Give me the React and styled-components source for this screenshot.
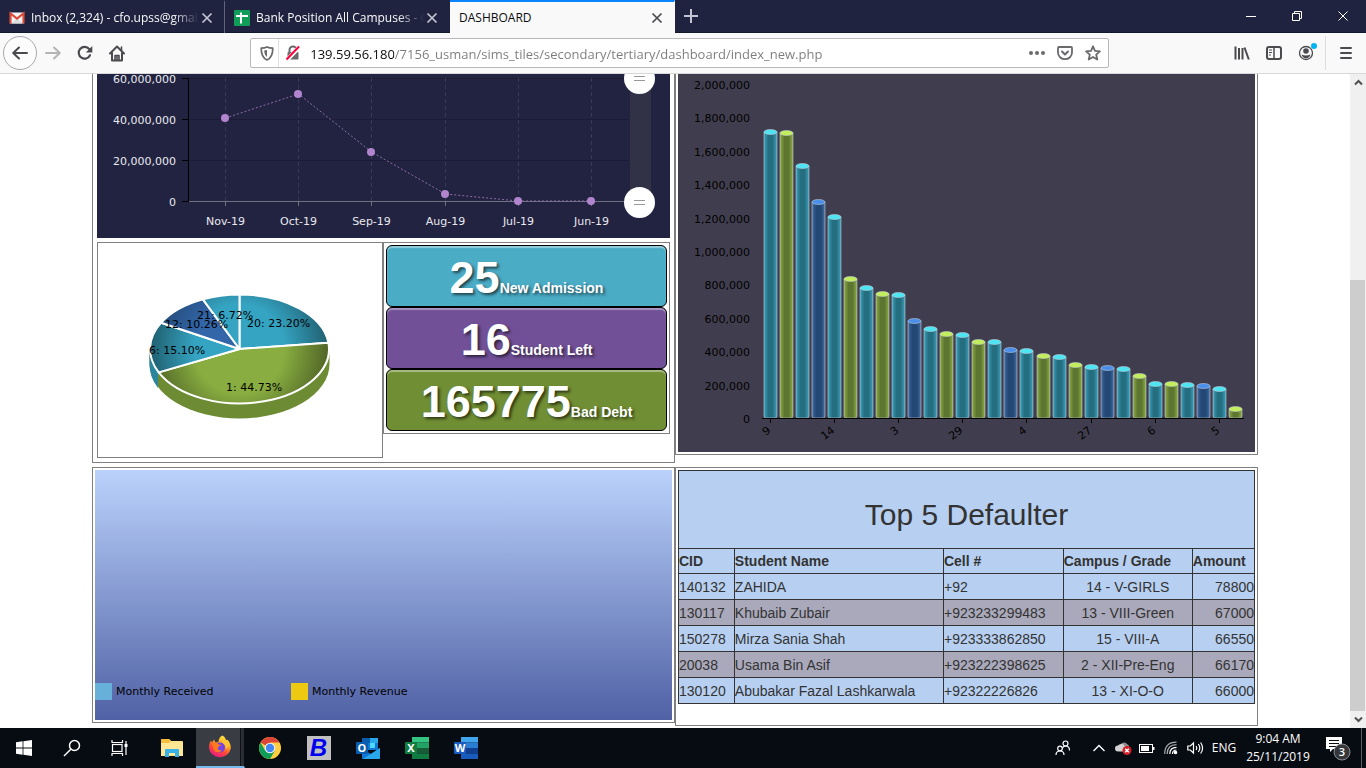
import React from "react";
import styled, { createGlobalStyle } from "styled-components";

const GlobalStyle = createGlobalStyle`
  *, *::before, *::after { box-sizing: border-box; }
  html, body { margin: 0; padding: 0; }
  body { background: #fff; font-family: "Liberation Sans", Arial, sans-serif; font-size: 14px; color: #333; }
  button { font: inherit; color: inherit; background: none; border: 0; padding: 0; margin: 0; }
  svg { display: block; }
`;

const UI_FONT = `"Open Sans", "Noto Sans", sans-serif`;
const CHART_FONT = `"DejaVu Sans", Verdana, sans-serif`;

const Window = styled.div`
  display: flex;
  flex-direction: column;
  min-height: 100vh;
`;

/* ---------- tab strip ---------- */

const TabStrip = styled.header`
  display: flex;
  height: 33px;
  background: #202340;
  border-bottom: 1px solid #15172c;
  color: #f9f9fa;
  font: 12px/16px ${UI_FONT};
`;

const Tab = styled.div`
  display: flex;
  align-items: center;
  flex: 0 1 225px;
  min-width: 0;
  height: 33px;
  padding: 0 9px;
  background: ${(p) => (p.$active ? "#f9f9fa" : "transparent")};
  color: ${(p) => (p.$active ? "#0c0c0d" : "inherit")};
  border-top: 2px solid ${(p) => (p.$active ? "#0a84ff" : "transparent")};
  border-right: 1px solid ${(p) => (p.$divided ? "#62647a" : "transparent")};
`;

const TabTitle = styled.button`
  display: flex;
  align-items: center;
  gap: 6px;
  flex: 1;
  min-width: 0;
  overflow: hidden;
  text-align: left;
`;

const TabText = styled.span`
  flex: 1;
  overflow: hidden;
  white-space: nowrap;
  ${(p) => p.$fade && "mask-image: linear-gradient(90deg, #000 calc(100% - 26px), transparent);"}
`;

const SmallButton = styled.button`
  display: grid;
  place-items: center;
  width: 16px;
  height: 16px;
  color: ${(p) => (p.$dark ? "#4a4a4f" : "#c4c5d2")};
`;

const NewTab = styled.button`
  display: grid;
  place-items: center;
  width: 32px;
  color: #c4c5d2;
`;

const WindowControls = styled.div`
  display: flex;
  margin-left: auto;
`;

const WindowButton = styled.button`
  display: grid;
  place-items: center;
  width: 46px;
  color: #fff;
`;

/* ---------- navigation bar ---------- */

const NavBar = styled.nav`
  display: flex;
  align-items: center;
  height: 41px;
  background: #f9f9fa;
  border-bottom: 1px solid #d8d8da;
  color: #4a4a4f;
`;

const NavGroup = styled.div`
  display: flex;
  align-items: center;
  padding: 0 ${(p) => p.$end || 0}px 0 ${(p) => p.$start || 0}px;
`;

const NavButton = styled.button`
  display: grid;
  place-items: center;
  width: 32px;
  height: 32px;
  color: ${(p) => (p.$muted ? "#b5b5b8" : "inherit")};
`;

const BackButton = styled(NavButton)`
  width: 34px;
  height: 34px;
  border: 1px solid #a9a9ab;
  border-radius: 50%;
  background: #fcfcfc;
`;

const Spacer = styled.div`
  flex: 118 1 0;
`;

const NavDivider = styled.div`
  width: 1px;
  height: 34px;
  margin: 0 4px 0 3px;
  background: #dcdcde;
`;

const UrlBar = styled.div`
  display: flex;
  align-items: center;
  flex: 857 1 0;
  min-width: 0;
  height: 30px;
  padding: 0 1px 0 4px;
  background: #fff;
  border: 1px solid #b9b9bc;
  border-radius: 2px;
`;

const UrlButton = styled.button`
  display: grid;
  place-items: center;
  width: 28px;
  height: 28px;
  color: #6a6a6d;
`;

const UrlShield = styled(UrlButton)`
  width: 24px;
  border-right: 1px solid #dedee0;
`;

const UrlInput = styled.input`
  flex: 1;
  min-width: 0;
  height: 28px;
  padding: 2px 0 0 3px;
  border: 0;
  outline: 0;
  font: 13px/20px ${UI_FONT};
  color: transparent;
  background: linear-gradient(90deg, #0c0c0d 87px, #7b7b7e 87px);
  background-clip: text;
`;

/* ---------- page ---------- */

const Viewport = styled.div`
  display: flex;
  flex: 1;
  background: #fff;
`;

const Page = styled.main`
  flex: 1;
  min-width: 0;
`;

const Board = styled.div`
  display: grid;
  grid-template-columns: 1fr 1fr;
  align-items: start;
  row-gap: 4px;
  max-width: 1166px;
  margin: 0 auto;
`;

const Panel = styled.section`
  min-width: 0;
  padding: ${(p) => p.$pad}px;
  border: 1px solid #808080;
  ${(p) => p.$continued && "border-top: 0; padding-top: 0;"}
`;

const DefaulterPanel = styled(Panel)`
  padding-bottom: 21px;
`;

const Chart = styled.svg`
  width: 100%;
  height: auto;
  background: ${(p) => p.$bg || "transparent"};
  font: 11px ${CHART_FONT};
`;

const SplitRow = styled.div`
  display: grid;
  grid-template-columns: 286fr 287fr;
  align-items: start;
  margin-top: 4px;
`;

const Box = styled.div`
  border: 1px solid #808080;
  padding: ${(p) => p.$pad || 0}px;
`;

const Tile = styled.button`
  display: block;
  width: 100%;
  height: 62px;
  padding-top: 4px;
  border: 1px solid #000;
  border-radius: 6px;
  background: ${(p) => p.$color};
  box-shadow: inset 0 2px 1px rgba(255, 255, 255, 0.4);
  color: #fff;
  font-weight: bold;
  font-size: 14px;
  line-height: 56px;
  text-shadow: 2px 2px 3px rgba(0, 0, 0, 0.6);
`;

const TileNumber = styled.span`
  font-size: 45px;
`;

const RevenueChart = styled.div`
  display: flex;
  align-items: flex-end;
  height: 250px;
  padding-bottom: 20px;
  background: linear-gradient(#bbd2fc, #5061a5);
`;

const LegendItem = styled.div`
  display: flex;
  align-items: center;
  gap: 4px;
  width: 196px;
  font: 11px/17px ${CHART_FONT};
  color: #000;
`;

const Swatch = styled.span`
  width: 17px;
  height: 17px;
  background: ${(p) => p.$color};
`;

/* ---------- defaulter table ---------- */

const Table = styled.table`
  width: 100%;
  table-layout: fixed;
  border-collapse: collapse;
  background: #b7d0f1;
  line-height: 20px;
`;

const Col = styled.col`
  width: ${(p) => p.$share}%;
`;

const TitleCell = styled.th`
  height: 78px;
  padding: 10px 0 0;
  border: 1px solid #333;
  font-size: 30px;
  font-weight: normal;
`;

const HeadCell = styled.th`
  height: 25px;
  padding: 0;
  border: 1px solid #333;
  text-align: left;
`;

const Row = styled.tr`
  background: ${(p) => (p.$striped ? "#aaa9bb" : "transparent")};
`;

const Cell = styled.td`
  height: 26px;
  padding: 0;
  border: 1px solid #333;
  text-align: ${(p) => p.$align || "left"};
  white-space: nowrap;
`;

/* ---------- scrollbar ---------- */

const ScrollBar = styled.div`
  display: flex;
  flex-direction: column;
  width: 16px;
  background: #f0f0f0;
  color: #505050;
`;

const ScrollButton = styled.button`
  display: grid;
  place-items: center;
  height: 17px;
`;

const ScrollGap = styled.div`
  flex: 189 1 0;
`;

const ScrollThumb = styled.div`
  flex: 431 1 0;
  margin-right: 1px;
  background: #cdcdcd;
`;

/* ---------- taskbar ---------- */

const TaskBar = styled.footer`
  display: flex;
  justify-content: space-between;
  height: 40px;
  background: #070b12;
  color: #fff;
`;

const TaskGroup = styled.div`
  display: flex;
  margin-right: ${(p) => p.$gap || 0}px;
`;

const TaskButton = styled.button`
  display: grid;
  place-items: center;
  width: ${(p) => (p.$app ? 49 : 48)}px;
  height: 40px;
  ${(p) =>
    p.$active &&
    "background: linear-gradient(90deg, #393d43 44px, #0f1319 44px 45px, #2a2e34 45px); border-bottom: 2px solid #76b9ed; border-right: 1px solid #070b12;"}
`;

const TrayButton = styled.button`
  display: grid;
  place-items: center;
  width: ${(p) => p.$w || 24}px;
  height: 40px;
`;

const TrayText = styled(TrayButton)`
  font: 12px/18px ${UI_FONT};
`;

const ShowDesktop = styled.button`
  width: 5px;
  border-left: 1px solid #5c6066;
`;

/* ---------- icons ---------- */

const Cross = ({ size = 12, w = 1.7 }) => (
  <svg width={size} height={size} viewBox="0 0 12 12" stroke="currentColor" strokeWidth={w} fill="none">
    <path d="M1.5 1.5l9 9M10.5 1.5l-9 9" />
  </svg>
);

const GmailIcon = () => (
  <svg width="16" height="16" viewBox="0 0 16 16">
    <path d="M1 2.5h14v11H1z" fill="#f5f5f5" />
    <path d="M3 13.5L8 8l5 5.5z" fill="#dcdcdc" />
    <path d="M1.5 13.5V3.500L8 8.500l6.500-5v10" fill="none" stroke="#dd4b39" strokeWidth="2.2" />
  </svg>
);

const SheetsIcon = () => (
  <svg width="16" height="16" viewBox="0 0 16 16">
    <rect width="16" height="16" rx="1" fill="#0f9d58" />
    <path d="M7 2.5v11M2 6h12" stroke="#fff" strokeWidth="2" />
  </svg>
);

const Back = () => (
  <svg width="18" height="18" viewBox="0 0 18 18" fill="none" stroke="currentColor" strokeWidth="2" strokeLinecap="round" strokeLinejoin="round">
    <path d="M16 9H2.5M8 3.5L2.2 9 8 14.5" />
  </svg>
);

const Forward = () => (
  <svg width="18" height="18" viewBox="0 0 18 18" fill="none" stroke="currentColor" strokeWidth="2" strokeLinecap="round" strokeLinejoin="round">
    <path d="M2 9h13.5M10 3.5L15.8 9 10 14.5" />
  </svg>
);

const Reload = () => (
  <svg width="16" height="16" viewBox="0 0 16 16">
    <path d="M13 10.2A5.9 5.9 0 1 1 12.2 4" fill="none" stroke="currentColor" strokeWidth="2.1" strokeLinecap="round" />
    <path d="M15.3 1v6.5H8.8z" fill="currentColor" />
  </svg>
);

const Home = () => (
  <svg width="16" height="17" viewBox="0 0 16 17" fill="none" stroke="currentColor" strokeWidth="2" strokeLinejoin="round" strokeLinecap="round">
    <path d="M1 8.5l7-7 7 7" />
    <path d="M3 8v7.5h10V8" />
    <path d="M8 15v-4M6 15v-4.5h4V15M12.5 2v3" strokeWidth="1.6" />
  </svg>
);

const Shield = () => (
  <svg width="14" height="15" viewBox="0 0 14 15">
    <path d="M7 1C5 2 3 2.200 1.200 2.200c0 5 .8 9.500 5.800 11.800 5-2.300 5.800-6.800 5.800-11.800C11 2.200 9 2 7 1z" fill="none" stroke="currentColor" strokeWidth="1.700" strokeLinejoin="round" />
    <path d="M7 4v7C4.800 9.500 4.300 7 4.200 4.600z" fill="currentColor" />
  </svg>
);

const LockOff = () => (
  <svg width="16" height="16" viewBox="0 0 16 16">
    <path d="M4.500 8V5a3.500 3.500 0 0 1 7 0v3" fill="none" stroke="currentColor" strokeWidth="2" />
    <rect x="2.500" y="7" width="11" height="7.500" rx="1" fill="currentColor" />
    <path d="M2 15L14.500 2" stroke="#fff" strokeWidth="4" />
    <path d="M1.500 14.500L14 1.500" stroke="#ff0039" strokeWidth="2" />
  </svg>
);

const Dots = () => (
  <svg width="16" height="16" viewBox="0 0 16 16" fill="currentColor">
    <circle cx="2" cy="8" r="2" /><circle cx="8" cy="8" r="2" /><circle cx="14" cy="8" r="2" />
  </svg>
);

const Pocket = () => (
  <svg width="16" height="16" viewBox="0 0 16 16" fill="none" stroke="currentColor" strokeLinecap="round" strokeLinejoin="round">
    <path d="M2 2h12q1 0 1 1v4.500a7 6.700 0 0 1-14 0V3q0-1 1-1z" strokeWidth="1.800" />
    <path d="M5 6.500l3 3 3-3" strokeWidth="2" />
  </svg>
);

const Star = () => (
  <svg width="16" height="16" viewBox="0 0 16 16" fill="none" stroke="currentColor" strokeWidth="1.800" strokeLinejoin="round">
    <path d="M8 1.300l2 4.500 4.900.5-3.700 3.300 1.100 4.900L8 12l-4.300 2.500 1.100-4.900L1.100 6.300 6 5.800z" />
  </svg>
);

const Library = () => (
  <svg width="16" height="16" viewBox="0 0 16 16" stroke="currentColor" strokeWidth="2" fill="none">
    <path d="M1.500 1.500v13M5 3v11.500M8.500 3v11.500M10.500 2.500l4.300 12" />
  </svg>
);

const SidebarIcon = () => (
  <svg width="16" height="16" viewBox="0 0 16 16" fill="none" stroke="currentColor">
    <rect x="1" y="2" width="14" height="12" rx="2" strokeWidth="2" />
    <path d="M8 2v12" strokeWidth="1.500" />
    <path d="M3 5h3M3 7.500h3M3 10h2" />
  </svg>
);

const Account = () => (
  <svg width="22" height="22" viewBox="0 0 22 22">
    <circle cx="11" cy="11" r="6.500" fill="none" stroke="currentColor" strokeWidth="1.300" />
    <circle cx="11" cy="9" r="2.800" fill="currentColor" />
    <path d="M6.500 12.500q4.500 2 9 0-1 3.700-4.500 3.700t-4.500-3.700z" fill="currentColor" />
    <circle cx="19" cy="4" r="3" fill="#00b3f4" />
  </svg>
);

const Menu = () => (
  <svg width="14" height="14" viewBox="0 0 14 14" stroke="currentColor" strokeWidth="2" strokeLinecap="round">
    <path d="M2 2h10M2 7h10M2 12h10" />
  </svg>
);

const Chevron = ({ down }) => (
  <svg width="9" height="7" viewBox="0 0 9 7" fill="none" stroke="currentColor" strokeWidth="2">
    <path d={down ? "M1 1.500L4.500 5 8 1.500" : "M1 5.500L4.500 2 8 5.500"} />
  </svg>
);

const WindowsLogo = () => (
  <svg width="16" height="16" viewBox="0 0 16 16" fill="#fff">
    <path d="M0 2.200L6.600 1.300V7.600H0zM7.400 1.200L16 0V7.600H7.400zM0 8.400H6.600V14.700L0 13.800zM7.400 8.400H16V16L7.400 14.800z" />
  </svg>
);

const SearchIcon = () => (
  <svg width="18" height="18" viewBox="0 0 18 18" fill="none" stroke="#fff" strokeWidth="1.500">
    <circle cx="11.500" cy="6.500" r="5" /><path d="M7.800 10.200L1 17" />
  </svg>
);

const TaskView = () => (
  <svg width="18" height="16" viewBox="0 0 18 16" fill="none" stroke="#fff" strokeWidth="1.200">
    <path d="M1 0v2.500h10.500V0M1 16v-2.500h10.500V16" />
    <rect x="1.500" y="4.500" width="9.500" height="7" />
    <path d="M15 1v14" /><path d="M13.500 4h3v3h-3z" fill="#fff" stroke="none" />
  </svg>
);

const ExplorerIcon = () => (
  <svg width="22" height="20" viewBox="0 0 22 20">
    <path d="M0 2q0-1 1-1h7l2 2h11q1 0 1 1v14H0z" fill="#ffe28a" />
    <path d="M0 2q0-1 1-1h7l2 2-2 2H0z" fill="#f5bd3d" />
    <path d="M0 5h22v12H0z" fill="#ffe694" />
    <path d="M4 19v-7q0-1 1-1h12q1 0 1 1v7h-4v-4H8v4z" fill="#38b0e8" />
  </svg>
);

const FirefoxIcon = () => (
  <svg width="24" height="24" viewBox="0 0 24 24">
    <defs>
      <linearGradient id="fox" x1="0.8" y1="0" x2="0.3" y2="1">
        <stop offset="0" stopColor="#fff04a" /><stop offset="0.35" stopColor="#ffb128" />
        <stop offset="0.65" stopColor="#ff4b36" /><stop offset="1" stopColor="#e5158a" />
      </linearGradient>
    </defs>
    <path d="M14.500.5c2 1 3 2.800 3.500 4.800l1.500-.5c2.300 2.500 3.500 5.500 3.300 8.500A11 10.500 0 0 1 1 13c0-3 .5-5 2-7.500l1 2 2-3 1.500 3 3-.5c0-3 1.500-5.500 4-6.500z" fill="url(#fox)" />
    <circle cx="12" cy="12.500" r="5" fill="#7542e5" />
    <path d="M4 8c3-1 5 0 7 1.500l3 .5c-1.500 1-3 1-4 2.500-1 2 1 3.500 4 2.500-2 3-6 3-8 0-1-2-1-4-2-7z" fill="#ff7a1e" />
    <path d="M14 7c3 1.500 4.500 4 3.500 7.500 3-2 3.500-6 1.500-9l-2-1z" fill="#ffc534" />
  </svg>
);

const ChromeIcon = () => (
  <svg width="22" height="22" viewBox="0 0 22 22">
    <circle cx="11" cy="11" r="11" fill="#ffcd40" />
    <path d="M11 11L1.500 5.500A11 11 0 0 1 20.500 5.500H11z" fill="#db4437" />
    <path d="M1.500 5.500A11 11 0 0 0 11 22l4.800-8.300H6.300z" fill="#0f9d58" />
    <circle cx="11" cy="11" r="5.300" fill="#f1f1f1" />
    <circle cx="11" cy="11" r="4.200" fill="#4285f4" />
  </svg>
);

const BIcon = styled.span`
  display: grid;
  place-items: center;
  width: 24px;
  height: 24px;
  background: #c0c0c0;
  color: #0000f0;
  font: italic bold 24px/24px "Liberation Sans", Arial, sans-serif;
`;

const OfficeIcon = ({ letter, colors, mail }) => (
  <svg width="24" height="22" viewBox="0 0 24 22">
    {mail ? (
      <>
        <path d="M6 1h16v12H6z" fill={colors[1]} />
        <path d="M6 1h8v5H6z" fill={colors[3]} />
        <path d="M14 1h8v5h-8z" fill={colors[0]} />
        <path d="M14 6h5v5h-5z" fill={colors[2]} />
        <path d="M6 12l9 5 9-6v10q0 1-1 1H7q-1 0-1-1z" fill={colors[1]} />
        <path d="M7 22l17-11v10q0 1-1 1z" fill={colors[0]} />
      </>
    ) : (
      colors.map((c, i) => <path key={c} d={`M7 ${i * 5.5}h17v5.500H7z`} fill={c} />)
    )}
    <rect x="0" y="5" width="12" height="12" rx="1" fill={colors[3]} />
    <text x="6" y="15" textAnchor="middle" fill="#fff" fontFamily="Open Sans, sans-serif" fontWeight="700" fontSize="11">{letter}</text>
  </svg>
);

const People = () => (
  <svg width="16" height="16" viewBox="0 0 16 16" fill="none" stroke="#fff" strokeWidth="1.200">
    <circle cx="10.500" cy="3.500" r="2.500" /><circle cx="5" cy="8.500" r="2.300" />
    <path d="M1 15q0-4 4-4t4 4M7.500 8q1-2 3-2 4 0 4 4.500" />
  </svg>
);

const TrayUp = () => (
  <svg width="12" height="8" viewBox="0 0 12 8" fill="none" stroke="#fff" strokeWidth="1.400"><path d="M.5 7L6 1.500 11.500 7" /></svg>
);

const CloudError = () => (
  <svg width="17" height="14" viewBox="0 0 17 14">
    <path d="M5 5a4 4 0 0 1 7-2 3.500 3.500 0 0 1 2 4v2H5z" fill="#8d8d8d" />
    <path d="M3 10.500a3 3 0 0 1 0-6 4 4 0 0 1 6-.5l3 6.500z" fill="#d2d2d2" />
    <circle cx="12" cy="9.500" r="4.500" fill="#d3202a" />
    <path d="M10.200 7.700l3.600 3.600M13.800 7.700l-3.600 3.600" stroke="#fff" strokeWidth="1.500" />
  </svg>
);

const Battery = () => (
  <svg width="16" height="9" viewBox="0 0 16 9"><rect x=".5" y=".5" width="13" height="8" fill="none" stroke="#fff" /><path d="M2 2h8v5H2zM14 3h1.500v3H14z" fill="#fff" /></svg>
);

const Wifi = () => (
  <svg width="14" height="14" viewBox="0 0 14 14" fill="none" stroke="#fff" strokeWidth="1.200">
    <circle cx="11.500" cy="11.500" r="1.200" fill="#fff" />
    <path d="M8.500 13q0-4 4-4M5.800 13q0-6.700 6.700-6.700" />
    <path d="M3.200 13q0-9.300 9.300-9.300M.7 13Q.7 1.200 12.500 1.200" stroke="#a9abae" />
  </svg>
);

const Sound = () => (
  <svg width="17" height="14" viewBox="0 0 17 14" fill="none" stroke="#fff" strokeWidth="1.200">
    <path d="M.8 5h2.500L6.500 2v10L3.300 9H.8zM9 5q1.500 2 0 4M11.300 3q3 4 0 8M13.600 1.500q4 5.500 0 11" />
  </svg>
);

const Notice = () => (
  <svg width="26" height="26" viewBox="0 0 26 26">
    <path d="M1 2h16v12H8l-3 3v-3H1z" fill="#fff" />
    <path d="M4 5.500h10M4 8.500h10M4 11.500h7" stroke="#070b12" />
    <circle cx="17" cy="17" r="8" fill="#35373b" stroke="#8c8e92" />
    <text x="17" y="21" textAnchor="middle" fill="#fff" fontFamily="Open Sans, sans-serif" fontSize="11" fontWeight="600">3</text>
  </svg>
);

/* ---------- charts ---------- */

const MONTHS = [
  ["Nov-19", 44], ["Oct-19", 20], ["Sep-19", 78],
  ["Aug-19", 120], ["Jul-19", 127], ["Jun-19", 127],
];
const monthX = (i) => Math.round(128 + i * 73.2) + 0.5;
const LEVELS = ["60,000,000", "40,000,000", "20,000,000", "0"];

function Handle({ y }) {
  return (
    <g>
      <circle cx="542.5" cy={y} r="15.500" fill="#fff" />
      <path d={`M537 ${y - 2}h11M537 ${y + 2}h11`} stroke="#999" />
    </g>
  );
}

function LineChart() {
  return (
    <Chart viewBox="0 0 573 164" $bg="#222341" role="img" aria-label="Monthly amounts">
      <rect x="533" width="21" height="128" fill="#323246" />
      {LEVELS.map((label, i) => {
        const y = 4.5 + i * 41;
        return (
          <g key={label}>
            {i < 3 && <path d={`M92 ${y}H532`} stroke="#1c1a36" />}
            <path d={`M85 ${y}h7`} stroke="#000" />
            <text x="79" y={y + 4.5} textAnchor="end" fill="#e9e9ee">{label}</text>
          </g>
        );
      })}
      <path d="M92 127.500H532" stroke="#70707f" />
      <path d="M91.500 4v124" stroke="#000" />
      {MONTHS.map(([label], i) => (
        <g key={label}>
          <path d={`M${monthX(i)} 4V127`} stroke="#3b3a56" strokeDasharray="4 3" />
          <path d={`M${monthX(i)} 127v5`} stroke="#70707f" />
          <text x={monthX(i)} y="151" textAnchor="middle" fill="#e9e9ee">{label}</text>
        </g>
      ))}
      <polyline points={MONTHS.map(([, y], i) => `${monthX(i)},${y}`).join(" ")} fill="none" stroke="#8d6ca9" strokeDasharray="2 2" />
      {MONTHS.map(([label, y], i) => <circle key={label} cx={monthX(i) - 0.5} cy={y} r="4" fill="#b085cd" />)}
      <Handle y={4.5} />
      <Handle y={128.5} />
    </Chart>
  );
}

const SLICES = [
  { label: "20: 23.20%", share: 0.232, fill: "url(#pieTeal)", x: 149, y: 84 },
  { label: "1: 44.73%", share: 0.4473, fill: "url(#pieGreen)", x: 128, y: 148 },
  { label: "6: 15.10%", share: 0.151, fill: "url(#pieTeal)", x: 51, y: 111 },
  { label: "12: 10.26%", share: 0.1026, fill: "url(#pieBlue)", x: 67, y: 85 },
  { label: "21: 6.72%", share: 0.0671, fill: "url(#pieTeal)", x: 99, y: 76 },
];
const PIE = { cx: 141.5, cy: 106, rx: 89.5, ry: 54.5 };
const piePoint = (t) => {
  const a = t * Math.PI * 2;
  return `${(PIE.cx + PIE.rx * Math.sin(a)).toFixed(1)} ${(PIE.cy - PIE.ry * Math.cos(a)).toFixed(1)}`;
};

function PieGradient({ id, from, to }) {
  return (
    <radialGradient id={id} gradientUnits="userSpaceOnUse" cx={PIE.cx} cy={PIE.cy} r={PIE.rx}>
      <stop offset="0" stopColor={from} /><stop offset="0.5" stopColor={from} /><stop offset="1" stopColor={to} />
    </radialGradient>
  );
}

function PieChart() {
  let start = 0;
  return (
    <Chart viewBox="0 0 284 214" role="img" aria-label="Share by campus">
      <defs>
        <PieGradient id="pieTeal" from="#35a4c2" to="#205f70" />
        <PieGradient id="pieGreen" from="#89ad41" to="#506526" />
        <PieGradient id="pieBlue" from="#3266a8" to="#234874" />
      </defs>
      <path d="M51.500 106v15a90 54.500 0 0 0 180 0v-15z" fill="#6d8b33" />
      <path d="M51.500 106v15q0 13 8.500 24v-24z" fill="#2b869d" />
      {SLICES.map((s) => {
        const end = start + s.share;
        const d = `M${PIE.cx} ${PIE.cy}L${piePoint(start)}A${PIE.rx} ${PIE.ry} 0 0 1 ${piePoint(end)}z`;
        start = end;
        return <path key={s.label} d={d} fill={s.fill} stroke="#fff" strokeWidth="2" strokeLinejoin="round" />;
      })}
      {SLICES.map((s) => <text key={s.label} x={s.x} y={s.y} fill="#000">{s.label}</text>)}
    </Chart>
  );
}

const BAR_TOPS = [58, 59, 92, 128, 143, 205, 214, 220, 221, 247, 255, 260, 261, 268, 268, 276, 277, 282, 283, 291, 293, 294, 295, 302, 310, 310, 311, 312, 315, 335];
const BAR_HUES = ["Teal", "Green", "Teal", "Blue", "Teal", "Green"];
const HUES = {
  Teal: { edge: "#3fa3bd", mid: "#256e80", side: "#2d8399", cap: "#4de5f2" },
  Green: { edge: "#92ad4e", mid: "#5c7530", side: "#6f8d37", cap: "#c2ee5c" },
  Blue: { edge: "#4d74a6", mid: "#244773", side: "#2b5488", cap: "#4a90ea" },
};
const BAR_LABELS = ["9", "14", "3", "29", "4", "27", "6", "5"];
const barX = (i) => Math.floor(92.5 + i * 16.03) + 0.5;

function BarChart() {
  return (
    <Chart viewBox="0 0 577 378" $bg="#403e4e" role="img" aria-label="Amounts by campus">
      <defs>
        {Object.entries(HUES).map(([name, h]) => (
          <linearGradient key={name} id={`bar${name}`}>
            <stop offset="0" stopColor={h.edge} /><stop offset="0.2" stopColor={h.side} />
            <stop offset="0.35" stopColor={h.mid} /><stop offset="0.65" stopColor={h.mid} />
            <stop offset="0.8" stopColor={h.side} /><stop offset="1" stopColor={h.edge} />
          </linearGradient>
        ))}
      </defs>
      {Array.from({ length: 11 }, (_, i) => (
        <text key={i} x="72" y={Math.round(15 + i * 33.4)} textAnchor="end" fill="#000">
          {(2000000 - i * 200000).toLocaleString("en-US")}
        </text>
      ))}
      {BAR_TOPS.map((y, i) => {
        const hue = BAR_HUES[i % 6];
        const x = barX(i);
        return (
          <g key={i} stroke="#c9d0dc" strokeOpacity="0.55">
            <path d={`M${x - 6.5} ${y}V342q0 2 2 2h9q2 0 2-2V${y}z`} fill={`url(#bar${hue})`} />
            <ellipse cx={x} cy={y} rx="6.500" ry="2.500" fill={HUES[hue].cap} />
          </g>
        );
      })}
      <path d="M84 344.500H566" stroke="#000" />
      {BAR_LABELS.map((label, i) => {
        const x = barX(i * 4);
        return (
          <g key={label}>
            <path d={`M${x} 344v5`} stroke="#000" />
            <text transform={`translate(${x + 1} 358) rotate(-36)`} textAnchor="end" fill="#000">{label}</text>
          </g>
        );
      })}
    </Chart>
  );
}

const TILES = [
  { value: "25", label: "New Admission", color: "#4bacc6" },
  { value: "16", label: "Student Left", color: "#715097" },
  { value: "165775", label: "Bad Debt", color: "#708e33" },
];

const DEFAULTERS = [
  ["140132", "ZAHIDA", "+92", "14 - V-GIRLS", "78800"],
  ["130117", "Khubaib Zubair", "+923233299483", "13 - VIII-Green", "67000"],
  ["150278", "Mirza Sania Shah", "+923333862850", "15 - VIII-A", "66550"],
  ["20038", "Usama Bin Asif", "+923222398625", "2 - XII-Pre-Eng", "66170"],
  ["130120", "Abubakar Fazal Lashkarwala", "+92322226826", "13 - XI-O-O", "66000"],
];
const ALIGN = ["left", "left", "left", "center", "right"];

function DefaulterTable() {
  return (
    <Table>
      <colgroup>
        {[9.7, 36.3, 20.8, 22.4, 10.8].map((share) => <Col key={share} $share={share} />)}
      </colgroup>
      <thead>
        <tr><TitleCell colSpan={5}>Top 5 Defaulter</TitleCell></tr>
        <tr>
          {["CID", "Student Name", "Cell #", "Campus / Grade", "Amount"].map((h) => <HeadCell key={h} scope="col">{h}</HeadCell>)}
        </tr>
      </thead>
      <tbody>
        {DEFAULTERS.map((row, r) => (
          <Row key={row[0]} $striped={r % 2 === 1}>
            {row.map((value, c) => <Cell key={c} $align={ALIGN[c]}>{value}</Cell>)}
          </Row>
        ))}
      </tbody>
    </Table>
  );
}

export default function App() {
  return (
    <Window>
      <GlobalStyle />
      <TabStrip>
        <Tab $divided>
          <TabTitle><GmailIcon /><TabText $fade>Inbox (2,324) - cfo.upss@gmail.</TabText></TabTitle>
          <SmallButton aria-label="Close tab"><Cross /></SmallButton>
        </Tab>
        <Tab>
          <TabTitle><SheetsIcon /><TabText $fade>Bank Position All Campuses - G</TabText></TabTitle>
          <SmallButton aria-label="Close tab"><Cross /></SmallButton>
        </Tab>
        <Tab $active>
          <TabTitle><TabText>DASHBOARD</TabText></TabTitle>
          <SmallButton $dark aria-label="Close tab"><Cross /></SmallButton>
        </Tab>
        <NewTab aria-label="New tab">
          <svg width="14" height="14" viewBox="0 0 14 14" stroke="currentColor" strokeWidth="2"><path d="M7 0v14M0 7h14" /></svg>
        </NewTab>
        <WindowControls>
          <WindowButton aria-label="Minimize">
            <svg width="10" height="10" viewBox="0 0 10 10" stroke="currentColor"><path d="M0 5.500h10" /></svg>
          </WindowButton>
          <WindowButton aria-label="Restore">
            <svg width="10" height="10" viewBox="0 0 10 10" fill="none" stroke="currentColor"><path d="M.5 2.500h7v7h-7zM2.500 2.500v-2h7v7h-2" /></svg>
          </WindowButton>
          <WindowButton aria-label="Close"><Cross w={1} /></WindowButton>
        </WindowControls>
      </TabStrip>

      <NavBar>
        <NavGroup $start={3}>
          <BackButton aria-label="Back"><Back /></BackButton>
          <NavButton $muted aria-label="Forward"><Forward /></NavButton>
          <NavButton aria-label="Reload"><Reload /></NavButton>
          <NavButton aria-label="Home"><Home /></NavButton>
        </NavGroup>
        <Spacer />
        <UrlBar>
          <UrlShield aria-label="Tracking protection"><Shield /></UrlShield>
          <UrlButton aria-label="Connection not secure"><LockOff /></UrlButton>
          <UrlInput aria-label="Address" defaultValue="139.59.56.180/7156_usman/sims_tiles/secondary/tertiary/dashboard/index_new.php" />
          <UrlButton aria-label="Page actions"><Dots /></UrlButton>
          <UrlButton aria-label="Save to Pocket"><Pocket /></UrlButton>
          <UrlButton aria-label="Bookmark"><Star /></UrlButton>
        </UrlBar>
        <Spacer />
        <NavGroup $end={4}>
          <NavButton aria-label="Library"><Library /></NavButton>
          <NavButton aria-label="Sidebars"><SidebarIcon /></NavButton>
          <NavButton aria-label="Account"><Account /></NavButton>
          <NavDivider />
          <NavButton aria-label="Menu"><Menu /></NavButton>
        </NavGroup>
      </NavBar>

      <Viewport>
        <Page>
          <Board>
            <Panel $pad={4} $continued>
              <LineChart />
              <SplitRow>
                <Box><PieChart /></Box>
                <Box $pad={2}>
                  {TILES.map((t) => (
                    <Tile key={t.label} $color={t.color}><TileNumber>{t.value}</TileNumber>{t.label}</Tile>
                  ))}
                </Box>
              </SplitRow>
            </Panel>
            <Panel $pad={2} $continued>
              <BarChart />
            </Panel>
            <Panel $pad={2}>
              <RevenueChart>
                <LegendItem><Swatch $color="#67b0da" />Monthly Received</LegendItem>
                <LegendItem><Swatch $color="#edc911" />Monthly Revenue</LegendItem>
              </RevenueChart>
            </Panel>
            <DefaulterPanel $pad={2}>
              <DefaulterTable />
            </DefaulterPanel>
          </Board>
        </Page>
        <ScrollBar>
          <ScrollButton aria-label="Scroll up"><Chevron /></ScrollButton>
          <ScrollGap />
          <ScrollThumb />
          <ScrollButton aria-label="Scroll down"><Chevron down /></ScrollButton>
        </ScrollBar>
      </Viewport>

      <TaskBar>
        <TaskGroup $gap={3}>
          <TaskButton aria-label="Start"><WindowsLogo /></TaskButton>
          <TaskButton aria-label="Search"><SearchIcon /></TaskButton>
          <TaskButton aria-label="Task view"><TaskView /></TaskButton>
        </TaskGroup>
        <TaskGroup style={undefined}>
          <TaskButton $app aria-label="File Explorer"><ExplorerIcon /></TaskButton>
          <TaskButton $app $active aria-label="Firefox"><FirefoxIcon /></TaskButton>
          <TaskButton $app aria-label="Chrome"><ChromeIcon /></TaskButton>
          <TaskButton $app><BIcon>B</BIcon></TaskButton>
          <TaskButton $app aria-label="Outlook"><OfficeIcon mail letter="O" colors={["#28a8ea", "#0f78d4", "#50d9ff", "#0a5cae"]} /></TaskButton>
          <TaskButton $app aria-label="Excel"><OfficeIcon letter="X" colors={["#33c481", "#21a366", "#185c37", "#107c41"]} /></TaskButton>
          <TaskButton $app aria-label="Word"><OfficeIcon letter="W" colors={["#41a5ee", "#2b7cd3", "#103f91", "#185abd"]} /></TaskButton>
        </TaskGroup>
        <Spacer />
        <TaskGroup>
          <TrayButton $w={48} aria-label="People"><People /></TrayButton>
          <TrayButton aria-label="Hidden icons"><TrayUp /></TrayButton>
          <TrayButton aria-label="OneDrive"><CloudError /></TrayButton>
          <TrayButton aria-label="Battery"><Battery /></TrayButton>
          <TrayButton aria-label="Network"><Wifi /></TrayButton>
          <TrayButton aria-label="Volume"><Sound /></TrayButton>
          <TrayText $w={34}>ENG</TrayText>
          <TrayText $w={74}><span>9:04 AM<br />25/11/2019</span></TrayText>
          <TrayButton $w={46} aria-label="Notifications"><Notice /></TrayButton>
          <ShowDesktop aria-label="Show desktop" />
        </TaskGroup>
      </TaskBar>
    </Window>
  );
}
